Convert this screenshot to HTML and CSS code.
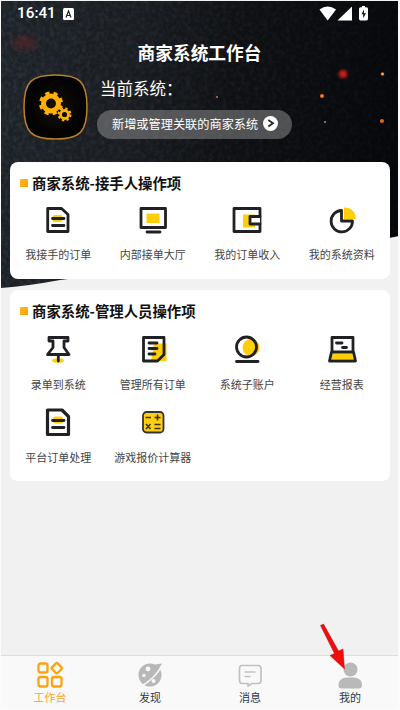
FILE: index.html
```html
<!DOCTYPE html>
<html lang="zh-CN">
<head>
<meta charset="utf-8">
<meta name="viewport" content="width=device-width">
<title>商家系统工作台</title>
<link rel="stylesheet" href="styles.css">
</head>
<body>
<div class="app">
  <svg class="backdrop" viewBox="0 0 400 290" aria-hidden="true">
    <defs>
      <linearGradient id="night" x1="0" y1="0" x2="1" y2="0.12"><stop offset="0" stop-color="#1d2329"/><stop offset=".35" stop-color="#191c21"/><stop offset=".62" stop-color="#0e1013"/><stop offset="1" stop-color="#07080b"/></linearGradient>
      <filter id="grain" x="0" y="0" width="100%" height="100%"><feTurbulence type="fractalNoise" baseFrequency=".22" numOctaves="3" seed="4"/><feColorMatrix values="0 0 0 0 .4  0 0 0 0 .45  0 0 0 0 .5  .9 0 0 0 -.32"/></filter>
      <filter id="glow" x="-100%" y="-100%" width="300%" height="300%"><feGaussianBlur stdDeviation="1.5"/></filter>
      <filter id="haze" x="-100%" y="-100%" width="300%" height="300%"><feGaussianBlur stdDeviation="4"/></filter>
      <linearGradient id="fade"><stop offset="0" stop-color="#fff"/><stop offset="1" stop-color="#444"/></linearGradient>
      <mask id="grainMask"><rect width="400" height="290" fill="url(#fade)"/></mask>
      <clipPath id="sweep"><path d="M1 1H399V236Q391 238 382 239L60 280Q28 286 1 288Z"/></clipPath>
    </defs>
    <g clip-path="url(#sweep)">
      <rect width="400" height="290" fill="url(#night)"/>
      <g mask="url(#grainMask)"><rect width="400" height="290" filter="url(#grain)" opacity=".28"/></g>
      <ellipse cx="25" cy="43" rx="12" ry="4" fill="#8a2828" opacity=".6" filter="url(#haze)"/>
      <circle cx="343" cy="74" r="4" fill="#cf1d18" filter="url(#glow)"/>
      <g fill="#e8651c"><circle cx="322" cy="96" r="2"/><circle cx="382.500" cy="74" r="1.800"/><circle cx="382" cy="121" r="2"/><circle cx="217" cy="97" r="1" fill="#bc7858"/><circle cx="325" cy="122" r="1" fill="#b68758"/></g>
      <g fill="#ffbd42"><circle cx="322" cy="96" r=".8"/><circle cx="382.500" cy="74" r="1"/></g>
    </g>
  </svg>

  <header class="status">
    <span class="clock">16:41</span>
    <svg class="input-mark" width="11" height="12" viewBox="0 0 11 12"><rect width="11" height="12" rx="1.500" fill="#fff"/><path d="M3 9.500L5.500 3 8 9.500M4 7.500H7" fill="none" stroke="#222" stroke-width="1.200"/></svg>
    <svg class="signals" width="50" height="15" viewBox="0 0 50 15" fill="#fff"><path d="M.5 3.500Q8.500-2.500 17 3.500L8.700 14.500Z"/><path d="M33 .5V14.500H18.500Z"/><path d="M41.500 1.300h1.500V0h3v1.300h1.500q1.500 0 1.500 1.500v10q0 1.700-1.500 1.700h-6q-1.500 0-1.500-1.700v-10q0-1.500 1.500-1.500Z"/><path d="M45 3.500L42.500 8.200h1.700v4L47 7.300h-2Z" fill="#111"/></svg>
  </header>

  <h1>商家系统工作台</h1>

  <section class="system">
    <svg class="emblem" width="65" height="66" viewBox="0 0 65 66">
      <defs><radialGradient id="ember"><stop offset="0" stop-color="#181204"/><stop offset=".8" stop-color="#030303"/></radialGradient></defs>
      <path d="M32.500 1C57 1 64 8 64 33S57 65 32.500 65 1 58 1 33 8 1 32.500 1Z" fill="url(#ember)" stroke="#b98228" stroke-width="1.500"/>
      <g transform="translate(15 16)" fill="none" stroke="#ffb00b">
        <circle cx="13" cy="13.500" r="7.500" stroke-width="5"/>
        <circle cx="13" cy="13.500" r="10.500" stroke-width="3" stroke-dasharray="4.250 4" transform="rotate(12 13 13.500)"/>
        <circle cx="26.500" cy="24.500" r="4" stroke-width="2.800"/>
        <circle cx="26.500" cy="24.500" r="6" stroke-width="2" stroke-dasharray="2.400 2.310"/>
      </g>
    </svg>
    <div class="current">
      <h2>当前系统：</h2>
      <a class="manage">新增或管理关联的商家系统<svg width="15" height="15" viewBox="0 0 15 15"><circle cx="7.500" cy="7.500" r="7.500" fill="#fff"/><path d="M5.300 4L10 7.200 5.300 10.600" fill="none" stroke="#24272b" stroke-width="1.800"/></svg></a>
    </div>
  </section>

  <section class="card card-first">
    <h3><i></i>商家系统-接手人操作项</h3>
    <div class="grid">
      <a><svg viewBox="0 0 32 32"><rect class="y" x="10.500" y="11" width="10" height="7" rx="2"/><path class="k" d="M5.700 4.500H19.500L26 10.500V27.500H5.700Z"/><path class="k" d="M10.500 14.500H22M10.500 21.500H22"/></svg><span>我接手的订单</span></a>
      <a><svg viewBox="0 0 32 32"><path class="y" d="M9.500 9.500H22.500V19H9.500Z"/><path class="k" d="M4 4.500H28.500V23.500H4ZM10 28H23"/></svg><span>内部接单大厅</span></a>
      <a><svg viewBox="0 0 32 32"><path class="y" d="M12 10.500H24V23.500H12Z"/><path class="k" d="M3 4.500H29V27.500H3Z"/><path class="k w" d="M29 12.500H19V20H29"/></svg><span>我的订单收入</span></a>
      <a><svg viewBox="0 0 32 32"><path class="y" d="M18 15V3.500Q29 3.500 30 15Z"/><path class="k" d="M15.500 6.500A10.700 10.700 0 1 0 26.500 17H15.500Z"/></svg><span>我的系统资料</span></a>
    </div>
  </section>

  <section class="card card-second">
    <h3><i></i>商家系统-管理人员操作项</h3>
    <div class="grid">
      <a><svg viewBox="0 0 32 32"><ellipse class="y" cx="16" cy="27.500" rx="6" ry="2.300"/><path class="k" d="M7 4.500H26V8H22V14.500L27 21.500H5.500L11 14.500V8H7ZM16.300 22V28"/></svg><span>录单到系统</span></a>
      <a><svg viewBox="0 0 32 32"><path class="y" d="M17 10.500H29.500V28H14Z"/><path class="k" d="M6.500 4.500H27V21.500L20.500 28H6.500Z"/><path class="k" d="M12 10H20M12 15.500H20M12 21H18"/></svg><span>管理所有订单</span></a>
      <a><svg viewBox="0 0 32 32"><circle class="y" cx="20" cy="14.500" r="8.500"/><circle class="k" cx="15.500" cy="14" r="10"/><path class="k" d="M5.500 28.500H27"/></svg><span>系统子账户</span></a>
      <a><svg viewBox="0 0 32 32"><path class="y" d="M6.500 20.500H26.500L27.500 26H5.500Z"/><path class="k" d="M6 18.500V4.500H27V18.500M5.500 19H27.500L29.500 28H3.500Z"/><path class="k" d="M10.500 10H16M16.500 14.500H20.500"/></svg><span>经营报表</span></a>
      <a><svg viewBox="0 0 32 32"><rect class="y" x="11" y="10.500" width="10" height="7" rx="2"/><path class="k thick" d="M5.500 4H20L26.500 10.500V28.500H5.500Z"/><path class="k" d="M10.500 14.500H22M10.500 21.500H22"/></svg><span>平台订单处理</span></a>
      <a><svg viewBox="0 0 32 32"><rect x="6" y="6" width="20.500" height="20.500" rx="3.500" fill="#ffce12" stroke="#30333a" stroke-width="1.800"/><path class="calc" d="M8.500 11.500H14M20.500 8.500V14.500M17.500 11.500H23.500M9 18L13.500 23M13.500 18L9 23M17.500 18.500H23.500M17.500 22.500H23.500"/></svg><span>游戏报价计算器</span></a>
    </div>
  </section>

  <nav class="tabs">
    <a class="active"><svg viewBox="0 0 28 28" fill="none" stroke="#fda30c" stroke-width="2.300"><rect x="2.500" y="2.500" width="9" height="9" rx="2"/><rect x="2.500" y="16" width="9" height="9.500" rx="2"/><rect x="16" y="16" width="9.500" height="9.500" rx="2"/><rect x="16.800" y="3.200" width="8" height="8" rx="1.500" transform="rotate(45 20.800 7.200)"/></svg><span>工作台</span></a>
    <a><svg viewBox="0 0 28 28"><circle cx="14" cy="14" r="11.500" fill="#b8b8b8"/><path d="M19 3.500L26 2.500 23.500 9Z" fill="#b8b8b8"/><path d="M26 4Q20 17 4 26" fill="none" stroke="#f8f8f8" stroke-width="1.700"/><g fill="#f8f8f8"><circle cx="12" cy="8" r="2.400"/><circle cx="8" cy="14.500" r="1.700"/><circle cx="17.500" cy="20" r="2"/></g></svg><span>发现</span></a>
    <a><svg viewBox="0 0 28 28" fill="none" stroke="#c1c1c1" stroke-width="1.700" stroke-linejoin="round"><path d="M6 4.500H22Q25 4.500 25 7.500V19.500Q25 22.500 22 22.500H16L12 25V22.500H6Q3.500 22.500 3.500 19.500V7.500Q3.500 4.500 6 4.500ZM8.500 11H19.500M8.500 15.500H14.500"/></svg><span>消息</span></a>
    <a class="profile"><svg viewBox="0 0 28 28" fill="#b9b9b9"><circle cx="14.500" cy="8.500" r="7"/><path d="M2.500 24Q3 16.500 11 16.500H18Q26 17 26 24Q26 27.500 23 27.500H5.500Q2.500 27.500 2.500 24Z"/></svg><span>我的</span>
      <svg class="pointer" width="28" height="48" viewBox="0 0 28 48"><path d="M1.500 2.500L4.500 1 19.500 28 24 26 25.500 46 11 32.500 15.500 30.500Z" fill="#f40c0c" stroke="#a91919" stroke-width=".5"/></svg>
    </a>
  </nav>
</div>
</body>
</html>
```
FILE: styles.css
```css
* { box-sizing: border-box; }
body {
  margin: 0;
  font-family: Roboto, "Noto Sans CJK SC", sans-serif;
  background: #fff;
}
h1, h2, h3 { margin: 0; }
svg { display: block; flex: none; }
.app {
  position: relative;
  isolation: isolate;
  display: flex;
  flex-direction: column;
  width: 400px;
  height: 710px;
  overflow: hidden;
  background: #f1f1f1;
  border: solid #fbfbfb;
  border-width: 0 2px 2px 1px;
}
.backdrop {
  position: absolute;
  z-index: -1;
  top: 0;
  left: -1px;
  width: 400px;
  height: 290px;
}
.status {
  display: flex;
  align-items: center;
  height: 27px;
  padding: 0 29px 0 16px;
  color: #fff;
}
.clock {
  width: 46px;
  font: 500 15.3px/27px Roboto, sans-serif;
}
.signals { margin-left: auto; }
h1 {
  height: 47px;
  color: #fff;
  font: 700 17.7px/51px "Noto Sans CJK SC", sans-serif;
  text-align: center;
}
.system {
  display: flex;
  gap: 9px;
  height: 88px;
  padding-left: 23px;
}
.emblem { margin-right: -1px; margin-left: -1px; }
.current { margin-left: 1px; }
.current h2 {
  height: 36px;
  padding-left: 3px;
  color: #fff;
  font: 400 16.5px/29px "Noto Sans CJK SC", sans-serif;
}
.manage {
  display: flex;
  align-items: center;
  gap: 5px;
  width: 195px;
  height: 29px;
  padding: 0 14px 2px 15px;
  border-radius: 15px;
  background: rgba(148, 148, 148, .5);
  color: #fff;
  font: 400 12.2px/26px "Noto Sans CJK SC", sans-serif;
  white-space: nowrap;
}
.card {
  flex: none;
  width: 380px;
  margin-left: 9px;
  border-radius: 8px;
  background: #fff;
}
.card-first { height: 117px; }
.card-second { height: 191px; margin-top: 11px; }
h3 {
  display: flex;
  align-items: center;
  gap: 4px;
  height: 42px;
  padding-left: 10px;
  color: #111;
  font: 700 14.4px/42px "Noto Sans CJK SC", sans-serif;
}
h3 i {
  width: 8px;
  height: 8px;
  background: linear-gradient(135deg, #ffbd20, #ff9d08);
}
.grid {
  display: grid;
  grid-template-columns: repeat(4, 94.5px);
  grid-auto-rows: 73px;
  padding-left: 1px;
}
.grid a {
  display: flex;
  flex-direction: column;
  align-items: center;
}
.grid svg { width: 32px; height: 32px; }
.grid span {
  margin-top: 10px;
  color: #444;
  font: 400 11px/16px "Noto Sans CJK SC", sans-serif;
  white-space: nowrap;
}
.card-second .grid { padding-top: 1px; }
.card-second .grid span { margin-top: 11px; }
.y { fill: #ffce08; }
.k {
  fill: none;
  stroke: #202124;
  stroke-width: 2.8;
  stroke-linecap: round;
  stroke-linejoin: round;
}
.thick { stroke-width: 3.2; }
.w { fill: #fff; }
.calc { fill: none; stroke: #38362a; stroke-width: 1.6; }
.tabs {
  display: flex;
  height: 53px;
  margin-top: auto;
  border-top: 1px solid #dedede;
  background: #f9f9f9;
}
.tabs a {
  position: relative;
  display: flex;
  flex: none;
  flex-direction: column;
  align-items: center;
  width: 100px;
  padding: 5px 2px 0 0;
  color: #303746;
  font: 400 11px/16px "Noto Sans CJK SC", sans-serif;
}
.tabs a > svg:first-child { width: 28px; height: 28px; }
.tabs .active { color: #f9a51b; }
.tabs .pointer {
  position: absolute;
  top: -33px;
  left: 18px;
}
```
